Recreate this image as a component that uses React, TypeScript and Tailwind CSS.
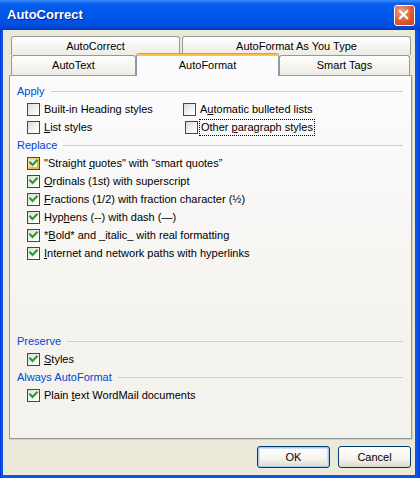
import type { ReactNode } from "react";

const Box = ({ checked, hot }: { checked?: boolean; hot?: boolean }) => (
    <span className="relative h-[13px] w-[13px] shrink-0 border border-[#1C5180] bg-[linear-gradient(135deg,#DCDCD7,#FFFFFF_85%)]">
        {hot && (
            <span className="absolute inset-0 border-2 border-b-[#F8B330] border-l-[#FCD68A] border-r-[#F8B330] border-t-[#FCD68A]" />
        )}
        {checked && (
            <svg viewBox="0 0 11 11" className="absolute inset-0 h-[11px] w-[11px]">
                <path d="M2.2 4.6 L4.5 6.9 L8.8 2.6" fill="none" stroke="#21A121" strokeWidth="2.1" strokeLinecap="square" />
            </svg>
        )}
    </span>
)

interface CheckProps {
    label: ReactNode
    checked?: boolean
    hot?: boolean
    focus?: boolean
    className?: string
}

const Check = ({ label, checked, hot, focus, className = "" }: CheckProps) => (
    <div className={`flex h-[18px] items-center ${className}`}>
        <Box checked={checked} hot={hot} />
        {focus ? (
            <span className="ml-[1px] flex h-[17px] items-center border border-dotted border-black px-[1px]">
                <span>{label}</span>
            </span>
        ) : (
            <span className="ml-[4px]">{label}</span>
        )}
    </div>
)

const Group = ({ title }: { title: string }) => (
    <div className="flex h-[18px] items-center pl-[7px] pr-[8px]">
        <span className="text-[#0046D5]">{title}</span>
        <div className="ml-[6px] h-px flex-1 bg-[#D0D0BF]" />
    </div>
)

const Tab = ({ label, className = "" }: { label: string; className?: string }) => (
    <div className={`flex h-full items-center justify-center rounded-t-[3px] border border-b-0 border-[#919B9C] bg-[linear-gradient(to_bottom,#FFFFFF,#F5F4EF_55%,#ECEBE4)] ${className}`}>
        {label}
    </div>
)

const Button = ({ label, primary }: { label: string; primary?: boolean }) => (
    <button
        className={`flex h-[22px] w-[73px] items-center justify-center rounded-[3px] border border-[#003C74] bg-[linear-gradient(to_bottom,#FFFFFF,#F4F3EE_60%,#DCD8CC)] ${primary ? "shadow-[inset_0_0_0_1px_#A8C4F2,inset_0_0_0_2px_#D2E2FB]" : ""}`}
    >
        {label}
    </button>
)

const App = () => {
    return (
        <div className="flex h-[478px] w-[420px] flex-col bg-[linear-gradient(to_right,#0831D9,#0855E6_2px,#0855E6_calc(100%-2px),#0831D9)] font-['Liberation_Sans',Arial,sans-serif] text-[11px] text-black">
            <div className="flex h-[30px] shrink-0 items-center justify-between bg-[linear-gradient(to_bottom,#3D8DFA_0%,#0A60F0_12%,#0058EC_35%,#0055E6_65%,#004BDA_88%,#003CC0_100%)] pl-[7px] pr-[5px]">
                <span className="text-[13px] font-bold text-white [text-shadow:1px_1px_0_#0F1E8C]">AutoCorrect</span>
                <div className="flex h-[21px] w-[21px] items-center justify-center rounded-[3px] border border-white bg-[radial-gradient(circle_at_35%_30%,#F3A58C,#E2582F_55%,#C83C16)]">
                    <svg viewBox="0 0 21 21" className="h-[19px] w-[19px]">
                        <path d="M5.5 5.5 L13.5 13.5 M13.5 5.5 L5.5 13.5" stroke="white" strokeWidth="2.4" strokeLinecap="square" />
                    </svg>
                </div>
            </div>

            <div className="mb-[3px] ml-[3px] mr-[5px] flex flex-1 flex-col bg-[#ECE9D8] pt-[6px]">
                <div className="ml-[8px] flex h-[19px] gap-[2px]">
                    <Tab label="AutoCorrect" className="w-[169px]" />
                    <Tab label="AutoFormat As You Type" className="w-[229px]" />
                </div>
                <div className="relative z-10 ml-[8px] flex h-[20px] items-end">
                    <Tab label="AutoText" className="w-[125px]" />
                    <div className="-mb-px flex h-[23px] w-[143px] flex-col overflow-hidden rounded-t-[3px] border-x border-[#919B9C] bg-[#FCFCFE]">
                        <div className="h-[3px] shrink-0 bg-[linear-gradient(to_bottom,#E68B2C,#FFC73C_60%)]" />
                        <div className="flex flex-1 items-center justify-center pb-[1px]">AutoFormat</div>
                    </div>
                    <Tab label="Smart Tags" className="w-[131px]" />
                </div>

                <div className="ml-[6px] flex h-[364px] w-[403px] flex-col border border-[#919B9C] bg-[linear-gradient(to_bottom,#FCFCFE,#F4F3EE_70%,#F3F2EC)] pt-[6px] shadow-[1px_1px_0_#D3D0C2]">
                    <Group title="Apply" />
                    <div className="grid grid-cols-[156px_1fr] pl-[17px]">
                        <Check label={<>Built-in Headin<u>g</u> styles</>} />
                        <Check label={<>A<u>u</u>tomatic bulleted lists</>} />
                        <Check label={<><u>L</u>ist styles</>} />
                        <Check label={<>Other <u>p</u>aragraph styles</>} focus className="ml-[2px]" />
                    </div>

                    <Group title="Replace" />
                    <div className="flex flex-col pl-[17px]">
                        <Check checked hot label={<>"Straight <u>q</u>uotes" with “smart quotes”</>} />
                        <Check checked label={<><u>O</u>rdinals (1st) with superscript</>} />
                        <Check checked label={<><u>F</u>ractions (1/2) with fraction character (½)</>} />
                        <Check checked label={<>Hyp<u>h</u>ens (--) with dash (—)</>} />
                        <Check checked label={<>*<u>B</u>old* and _italic_ with real formatting</>} />
                        <Check checked label={<><u>I</u>nternet and network paths with hyperlinks</>} />
                    </div>

                    <div className="h-[70px]" />

                    <Group title="Preserve" />
                    <div className="pl-[17px]">
                        <Check checked label={<><u>S</u>tyles</>} />
                    </div>

                    <Group title="Always AutoFormat" />
                    <div className="pl-[17px]">
                        <Check checked label={<>Plain <u>t</u>ext WordMail documents</>} />
                    </div>
                </div>

                <div className="mt-[7px] flex justify-end gap-[8px] pr-[4px]">
                    <Button label="OK" primary />
                    <Button label="Cancel" />
                </div>
            </div>
        </div>
    );
}

export default App;
